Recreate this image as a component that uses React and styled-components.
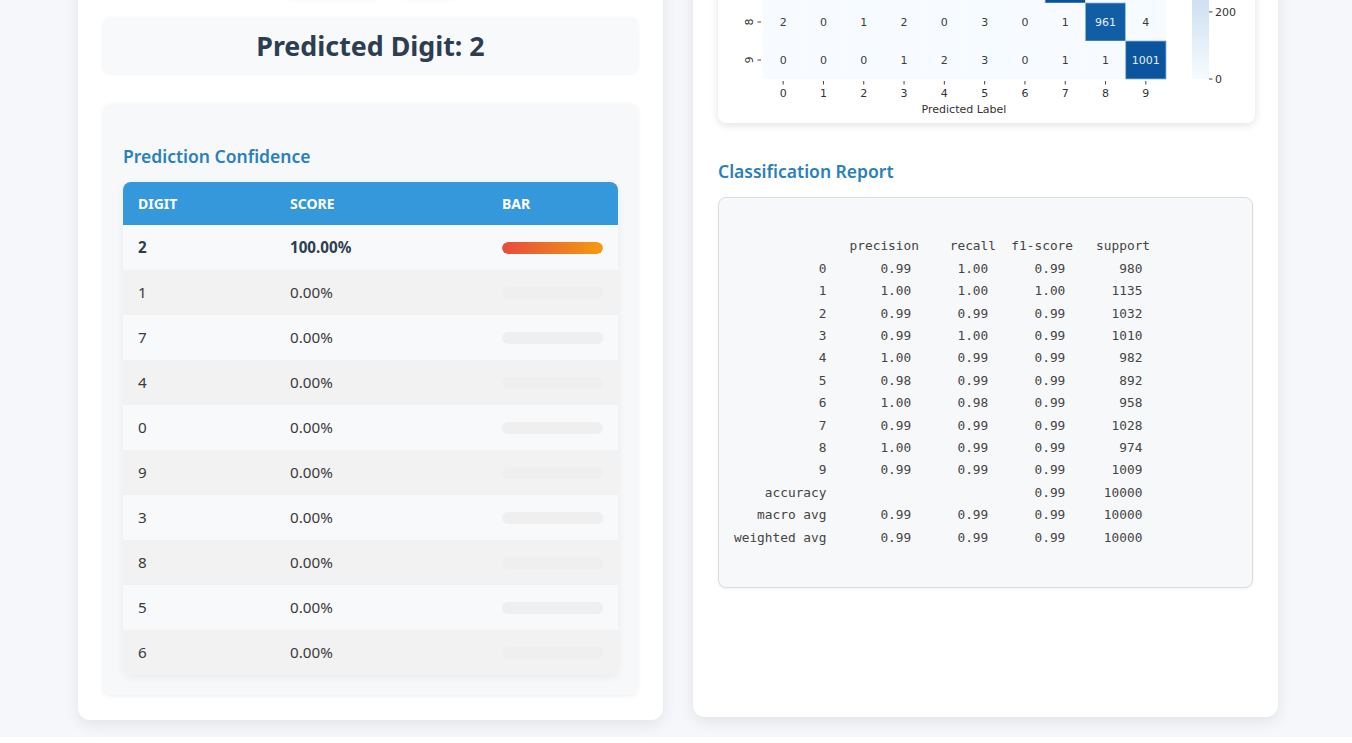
import React from "react";
import styled, { createGlobalStyle } from "styled-components";

const GlobalStyle = createGlobalStyle`
  html { background: #ffffff; }
  body {
    margin: 0;
    font-family: "Noto Sans", "Open Sans", Arial, sans-serif;
    color: #333;
    overflow: hidden;
  }
`;

const Page = styled.div`
  background: #f5f7fa;
  margin-top: -435px;
  padding: 20px 0 17px 78px;
`;

const Grid = styled.div`
  width: 1200px;
  display: grid;
  grid-template-columns: 585px 585px;
  column-gap: 30px;
  align-items: stretch;
`;

const Card = styled.section`
  background: #fff;
  border-radius: 12px;
  box-shadow: 0 5px 15px rgba(0, 0, 0, 0.08);
  padding: 25px;
  margin-bottom: ${(p) => p.$mb || 0}px;
  display: flex;
  flex-direction: column;
`;

const CardTitle = styled.h2`
  margin: 0 0 20px;
  height: 30px;
  font-size: 24px;
  line-height: 30px;
  color: #2c3e50;
  text-align: center;
`;

const CanvasBox = styled.div`
  height: 280px;
  width: 280px;
  align-self: center;
  background: #000;
  border-radius: 8px;
`;

const ButtonRow = styled.div`
  margin-top: 15px;
  display: flex;
  justify-content: center;
  gap: 20px;
`;

const Button = styled.button`
  height: 42px;
  width: ${(p) => p.$w}px;
  border: none;
  border-radius: 6px;
  background: #fff;
  color: #fff;
  font-size: 15px;
  box-shadow: 0 2px 5px rgba(0, 0, 0, 0.06);
`;

const ResultBox = styled.div`
  margin-top: 20px;
  height: 56px;
  background: #f7f9fb;
  border-radius: 8px;
  box-shadow: 0 1px 4px rgba(0, 0, 0, 0.06);
  display: flex;
  align-items: center;
  justify-content: center;
`;

const ResultText = styled.h2`
  margin: 0;
  font-size: 26.8px;
  font-weight: 700;
  color: #2c3e50;
`;

const ConfidenceBox = styled.div`
  margin-top: 31px;
  background: #f7f8fa;
  border-radius: 8px;
  box-shadow: 0 1px 5px rgba(0, 0, 0, 0.07);
  padding: 20px 20px 20px;
`;

const SectionHeading = styled.h3`
  margin: ${(p) => p.$m};
  font-size: 17.5px;
  line-height: 24px;
  font-weight: 600;
  color: #2a80b9;
`;

const Table = styled.table`
  width: 100%;
  border-collapse: separate;
  border-spacing: 0;
  table-layout: fixed;
  border-radius: 8px;
  overflow: hidden;
  box-shadow: 0 2px 8px rgba(0, 0, 0, 0.06);
`;

const Th = styled.th`
  background: #3498db;
  color: #fff;
  text-align: left;
  font-size: 14px;
  font-weight: 700;
  line-height: 19px;
  padding: 12px 15px;
  text-transform: uppercase;
`;

const Tr = styled.tr`
  background: ${(p) => (p.$alt ? "#f2f2f2" : "#f8f9fa")};
`;

const Td = styled.td`
  padding: 12px 15px;
  font-size: 15.2px;
  line-height: 21px;
  color: ${(p) => (p.$top ? "#2c3e50" : "#3a3a3a")};
  font-weight: ${(p) => (p.$top ? 700 : 400)};
`;

const BarTrack = styled.div`
  height: 12px;
  width: 101px;
  border-radius: 6px;
  background: #efefef;
  overflow: hidden;
`;

const BarFill = styled.div`
  height: 100%;
  border-radius: 6px;
  background: linear-gradient(90deg, #e74c3c, #f39c12);
`;

const MatrixBox = styled.div`
  background: #fff;
  border-radius: 8px;
  box-shadow: 0 2px 8px rgba(0, 0, 0, 0.12);
  height: 463px;
  width: 537px;
  overflow: hidden;
`;

const ReportPre = styled.pre`
  margin: 0;
  background: #f7f8fa;
  border: 1px solid #dcdcdc;
  border-radius: 8px;
  box-shadow: 0 1px 3px rgba(0, 0, 0, 0.06);
  padding: 15px;
  font-family: "DejaVu Sans Mono", "Liberation Mono", monospace;
  font-size: 12.8px;
  line-height: 22.4px;
  color: #444;
  white-space: pre;
`;

const rows = [
  { d: 2, s: 100 },
  { d: 1, s: 0 },
  { d: 7, s: 0 },
  { d: 4, s: 0 },
  { d: 0, s: 0 },
  { d: 9, s: 0 },
  { d: 3, s: 0 },
  { d: 8, s: 0 },
  { d: 5, s: 0 },
  { d: 6, s: 0 },
];

const cm = [
  [975, 0, 1, 0, 0, 1, 1, 1, 1, 0],
  [0, 1132, 1, 1, 0, 0, 0, 1, 0, 0],
  [1, 0, 1025, 1, 1, 0, 0, 3, 1, 0],
  [0, 0, 1, 1005, 0, 2, 0, 1, 1, 0],
  [0, 0, 0, 0, 972, 0, 2, 0, 1, 7],
  [1, 0, 0, 5, 0, 883, 1, 0, 1, 1],
  [3, 2, 0, 0, 1, 3, 947, 0, 2, 0],
  [0, 2, 4, 0, 0, 0, 0, 1019, 1, 2],
  [2, 0, 1, 2, 0, 3, 0, 1, 961, 4],
  [0, 0, 0, 1, 2, 3, 0, 1, 1, 1001],
];

const stops = [
  [247, 251, 255],
  [222, 235, 247],
  [198, 219, 239],
  [158, 202, 225],
  [107, 174, 214],
  [66, 146, 198],
  [33, 113, 181],
  [8, 81, 156],
  [8, 48, 107],
];

function blues(t) {
  const x = Math.max(0, Math.min(1, t)) * (stops.length - 1);
  const i = Math.min(stops.length - 2, Math.floor(x));
  const f = x - i;
  const c = stops[i].map((v, k) => Math.round(v + (stops[i + 1][k] - v) * f));
  return `rgb(${c[0]},${c[1]},${c[2]})`;
}

const VMAX = 1132;
const X0 = 45;
const CW = 40.3;
const Y0 = 39;
const RH = 38;

function ConfusionChart() {
  return (
    <svg width="537" height="463" viewBox="0 0 537 463" fontFamily="'DejaVu Sans', sans-serif">
      <defs>
        <linearGradient id="cbar" x1="0" y1="1" x2="0" y2="0">
          {stops.map((c, i) => (
            <stop key={i} offset={i / (stops.length - 1)} stopColor={`rgb(${c.join(",")})`} />
          ))}
        </linearGradient>
      </defs>
      <text x="246" y="24" fontSize="13" textAnchor="middle" fill="#262626">Confusion Matrix</text>
      {cm.map((row, r) =>
        row.map((v, c) => {
          const t = v / VMAX;
          return (
            <g key={`${r}-${c}`}>
              <rect
                x={X0 + c * CW}
                y={Y0 + r * RH}
                width={CW}
                height={RH}
                fill={blues(t * 0.97)}
                stroke={t > 0.5 ? "#8fb4dc" : "none"}
                strokeWidth="0.8"
              />
              <text
                x={X0 + c * CW + CW / 2}
                y={Y0 + r * RH + RH / 2 + 4}
                fontSize="11"
                textAnchor="middle"
                fill={t > 0.5 ? "#e6eef8" : "#3b3b3b"}
              >
                {v}
              </text>
            </g>
          );
        })
      )}
      {cm.map((_, r) => (
        <g key={`yl${r}`}>
          <line x1="39.5" x2="43" y1={Y0 + r * RH + RH / 2} y2={Y0 + r * RH + RH / 2} stroke="#444" strokeWidth="1" />
          <text
            transform={`translate(35 ${Y0 + r * RH + RH / 2}) rotate(-90)`}
            fontSize="11"
            textAnchor="middle"
            fill="#333"
          >
            {r}
          </text>
        </g>
      ))}
      {cm.map((_, c) => (
        <g key={`xl${c}`}>
          <line x1={X0 + c * CW + CW / 2} x2={X0 + c * CW + CW / 2} y1="421" y2="424.5" stroke="#444" strokeWidth="1" />
          <text x={X0 + c * CW + CW / 2} y="437" fontSize="11" textAnchor="middle" fill="#333">
            {c}
          </text>
        </g>
      ))}
      <text x="246" y="453" fontSize="11" textAnchor="middle" fill="#333">Predicted Label</text>
      <text transform="translate(12 229) rotate(-90)" fontSize="11" textAnchor="middle" fill="#333">True Label</text>
      <rect x="474" y={Y0} width="17" height={RH * 10} fill="url(#cbar)" />
      {[0, 200, 400, 600, 800, 1000].map((v) => {
        const y = Y0 + RH * 10 - (v / VMAX) * RH * 10;
        return (
          <g key={`cb${v}`}>
            <line x1="491" x2="494.5" y1={y} y2={y} stroke="#444" strokeWidth="1" />
            <text x="497" y={y + 4} fontSize="11" fill="#333">{v}</text>
          </g>
        );
      })}
    </svg>
  );
}

const report = `
               precision    recall  f1-score   support
           0       0.99      1.00      0.99       980
           1       1.00      1.00      1.00      1135
           2       0.99      0.99      0.99      1032
           3       0.99      1.00      0.99      1010
           4       1.00      0.99      0.99       982
           5       0.98      0.99      0.99       892
           6       1.00      0.98      0.99       958
           7       0.99      0.99      0.99      1028
           8       1.00      0.99      0.99       974
           9       0.99      0.99      0.99      1009
    accuracy                           0.99     10000
   macro avg       0.99      0.99      0.99     10000
weighted avg       0.99      0.99      0.99     10000

`;

export default function App() {
  return (
    <>
      <GlobalStyle />
      <Page>
        <Grid>
          <Card>
            <CardTitle>Draw a Digit</CardTitle>
            <CanvasBox />
            <ButtonRow>
              <Button $w={95}>Clear</Button>
              <Button $w={55}>Predict</Button>
            </ButtonRow>
            <ResultBox>
              <ResultText>Predicted Digit: 2</ResultText>
            </ResultBox>
            <ConfidenceBox>
              <SectionHeading $m="20px 0 14px">Prediction Confidence</SectionHeading>
              <Table>
                <colgroup>
                  <col style={{ width: "152px" }} />
                  <col style={{ width: "212px" }} />
                  <col />
                </colgroup>
                <thead>
                  <tr>
                    <Th>Digit</Th>
                    <Th>Score</Th>
                    <Th>Bar</Th>
                  </tr>
                </thead>
                <tbody>
                  {rows.map((r, i) => (
                    <Tr key={r.d} $alt={i % 2 === 1}>
                      <Td $top={i === 0}>{r.d}</Td>
                      <Td $top={i === 0}>{r.s.toFixed(2)}%</Td>
                      <Td>
                        <BarTrack>
                          <BarFill style={{ width: `${r.s}%` }} />
                        </BarTrack>
                      </Td>
                    </Tr>
                  ))}
                </tbody>
              </Table>
            </ConfidenceBox>
          </Card>
          <Card $mb={3}>
            <CardTitle>Model Performance</CardTitle>
            <MatrixBox>
              <ConfusionChart />
            </MatrixBox>
            <SectionHeading $m="36px 0 14px">Classification Report</SectionHeading>
            <ReportPre>{report}</ReportPre>
          </Card>
        </Grid>
      </Page>
    </>
  );
}
